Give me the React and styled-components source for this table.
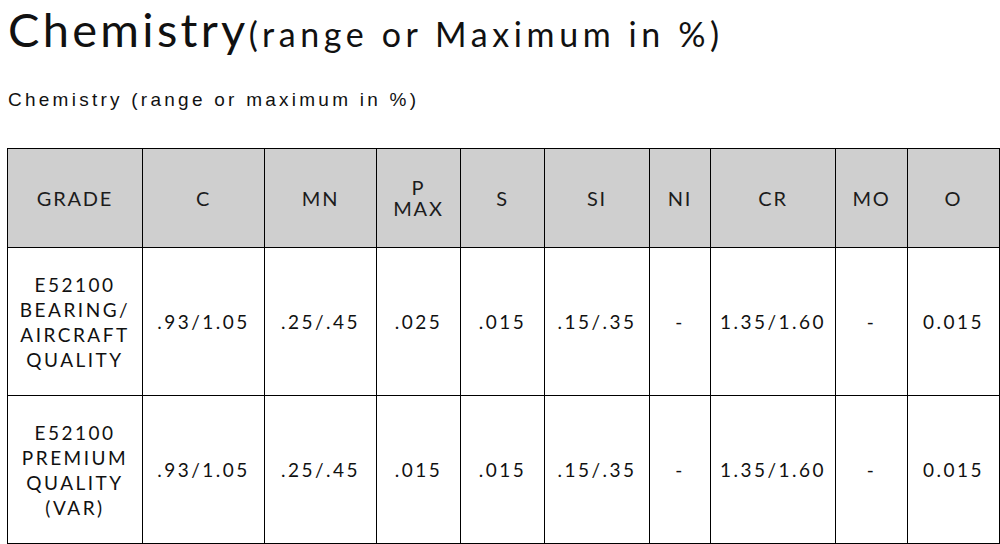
import React from 'react';
import styled, { createGlobalStyle } from 'styled-components';

const GlobalStyle = createGlobalStyle`
  body {
    margin: 0;
    background: #fff;
    color: #111;
  }
`;

const Page = styled.div`
  padding: 0 8px;
`;

const Heading = styled.h1`
  margin: 0;
  padding-top: 1px;
  font-family: Lato, "Open Sans", sans-serif;
  font-weight: 400;
  font-size: 47px;
  line-height: 56px;
  color: #111;
  letter-spacing: 3.3px;
`;

const HeadingNote = styled.span`
  font-size: 34px;
  letter-spacing: 4.6px;
`;

const Subtitle = styled.p`
  margin: 27px 0 0;
  font-family: "Liberation Sans", Arial, sans-serif;
  font-size: 19px;
  line-height: 22px;
  letter-spacing: 3.25px;
  color: #111;
`;

const Table = styled.table`
  margin: 37px 0 0 -1px;
  border-collapse: collapse;
  table-layout: fixed;
  width: 992px;
  font-family: Lato, "Open Sans", sans-serif;
  color: #111;
`;

const HeadCell = styled.th`
  height: 98px;
  padding: 0 4px;
  background: #cfcfcf;
  border: 1px solid #000;
  font-weight: 400;
  font-size: 20px;
  line-height: 21px;
  letter-spacing: 1.8px;
  text-align: center;
  color: #1c1c1c;
`;

const Cell = styled.td`
  height: 147px;
  padding: 0 4px;
  border: 1px solid #000;
  font-size: 19px;
  line-height: 25px;
  letter-spacing: 2.5px;
  text-align: center;
  vertical-align: middle;
`;

const widths = [135, 122, 112, 84, 84, 105, 61, 125, 72, 92];

const headers = [['GRADE'], ['C'], ['MN'], ['P', 'MAX'], ['S'], ['SI'], ['NI'], ['CR'], ['MO'], ['O']];

const rows = [
  {
    grade: ['E52100', 'BEARING/', 'AIRCRAFT', 'QUALITY'],
    values: ['.93/1.05', '.25/.45', '.025', '.015', '.15/.35', '-', '1.35/1.60', '-', '0.015'],
  },
  {
    grade: ['E52100', 'PREMIUM', 'QUALITY', '(VAR)'],
    values: ['.93/1.05', '.25/.45', '.015', '.015', '.15/.35', '-', '1.35/1.60', '-', '0.015'],
  },
];

const Lines = ({ parts }) =>
  parts.map((p, i) => (
    <React.Fragment key={i}>
      {i > 0 && <br />}
      {p}
    </React.Fragment>
  ));

const App = () => (
  <>
    <GlobalStyle />
    <Page>
      <Heading>
        Chemistry<HeadingNote>(range or Maximum in %)</HeadingNote>
      </Heading>
      <Subtitle>Chemistry (range or maximum in %)</Subtitle>
      <Table>
        <colgroup>
          {widths.map((w, i) => (
            <col key={i} style={{ width: w }} />
          ))}
        </colgroup>
        <thead>
          <tr>
            {headers.map((h) => (
              <HeadCell key={h.join()}>
                <Lines parts={h} />
              </HeadCell>
            ))}
          </tr>
        </thead>
        <tbody>
          {rows.map((row) => (
            <tr key={row.grade.join()}>
              <Cell>
                <Lines parts={row.grade} />
              </Cell>
              {row.values.map((v, i) => (
                <Cell key={i}>{v}</Cell>
              ))}
            </tr>
          ))}
        </tbody>
      </Table>
    </Page>
  </>
);

export default App;
